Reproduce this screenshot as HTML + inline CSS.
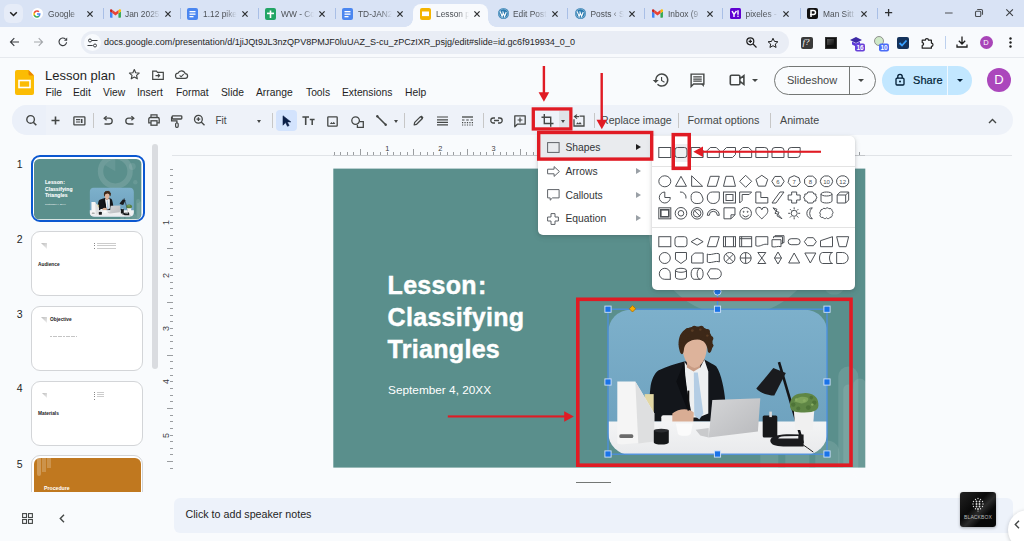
<!DOCTYPE html>
<html><head><meta charset="utf-8">
<style>
*{margin:0;padding:0;box-sizing:border-box}
html,body{width:1024px;height:541px;overflow:hidden;background:#f9fbfd;font-family:"Liberation Sans",sans-serif;position:relative}
.a{position:absolute}
svg{position:absolute;overflow:visible}
.tabt{position:absolute;top:9.4px;font-size:8.4px;line-height:10px;color:#4d5156;white-space:nowrap;overflow:hidden;-webkit-mask-image:linear-gradient(90deg,#000 65%,transparent 100%)}
.tsep{position:absolute;top:8px;width:1px;height:11px;background:#a9bfe6}
.menu{position:absolute;top:87px;font-size:10.3px;line-height:12px;color:#1f1f1f}
.tsp{position:absolute;top:113px;width:1px;height:15px;background:#c7c7c7}
</style></head>
<body>

<div class="a" style="left:0;top:0;width:1024px;height:27px;background:#d9e3f5"></div>
<div class="a" style="left:4px;top:4px;width:19px;height:19px;border-radius:6px;background:#e6ecf8"></div>
<svg style="left:9px;top:11px" width="9" height="6" viewBox="0 0 9 6"><path d="M1.2 1.2l3.3 3.3 3.3-3.3" stroke="#1f1f1f" stroke-width="1.5" fill="none"/></svg>
<div class="a" style="left:413px;top:4px;width:75px;height:23px;background:#f8fafd;border-radius:8px 8px 0 0"></div>
<div class="a" style="left:405px;top:19px;width:8px;height:8px;background:radial-gradient(circle at 0 0,transparent 7.5px,#f8fafd 8px)"></div>
<div class="a" style="left:488px;top:19px;width:8px;height:8px;background:radial-gradient(circle at 100% 0,transparent 7.5px,#f8fafd 8px)"></div>
<div class="a" style="left:31.5px;top:8.1px;width:11px;height:11px;border-radius:50%;background:#fff"></div><svg style="left:33px;top:9.6px" width="8" height="8" viewBox="0 0 24 24"><path fill="#4285F4" d="M22.56 12.25c0-.78-.07-1.53-.2-2.25H12v4.26h5.92c-.26 1.37-1.04 2.53-2.21 3.31v2.77h3.57c2.08-1.92 3.28-4.74 3.28-8.09z"/><path fill="#34A853" d="M12 23c2.97 0 5.46-.98 7.28-2.66l-3.57-2.77c-.98.66-2.23 1.06-3.71 1.06-2.86 0-5.29-1.93-6.16-4.53H2.18v2.84C3.99 20.53 7.7 23 12 23z"/><path fill="#FBBC05" d="M5.84 14.09c-.22-.66-.35-1.36-.35-2.09s.13-1.43.35-2.09V7.07H2.18C1.43 8.55 1 10.22 1 12s.43 3.45 1.18 4.93l2.85-2.22.81-.62z"/><path fill="#EA4335" d="M12 5.38c1.62 0 3.06.56 4.21 1.64l3.15-3.15C17.45 2.09 14.97 1 12 1 7.7 1 3.99 3.47 2.18 7.07l3.66 2.84c.87-2.6 3.3-4.53 6.16-4.53z"/></svg>
<div class="tabt" style="left:48px;width:34px">Google</div>
<svg style="left:87.1px;top:10.8px" width="6" height="6" viewBox="0 0 6 6"><path d="M.4.4l5.2 5.2M5.6.4L.4 5.6" stroke="#2d2f31" stroke-width="1.25"/></svg>
<div class="tsep" style="left:102.5px"></div>
<svg style="left:109.5px;top:9px" width="11" height="9" viewBox="0 0 24 18"><path fill="#4285f4" d="M1.6 18h3.8V8.7L0 4.6v11.8C0 17.3.7 18 1.6 18z"/><path fill="#34a853" d="M18.5 18h3.8c.9 0 1.6-.7 1.6-1.6V4.6l-5.5 4.1"/><path fill="#fbbc04" d="M18.5 1.5v7.2L24 4.6V2.4c0-2-2.3-3.2-3.9-2z"/><path fill="#ea4335" d="M5.5 8.7V1.5L12 6.4l6.5-4.9v7.2L12 13.6"/><path fill="#c5221f" d="M0 2.4v2.2l5.5 4.1V1.5L3.9.4C2.3-.8 0 .4 0 2.4z"/></svg>
<div class="tabt" style="left:125px;width:35px">Jan 2025</div>
<svg style="left:165.1px;top:10.8px" width="6" height="6" viewBox="0 0 6 6"><path d="M.4.4l5.2 5.2M5.6.4L.4 5.6" stroke="#2d2f31" stroke-width="1.25"/></svg>
<div class="tsep" style="left:180px"></div>
<svg style="left:186.5px;top:8px" width="11" height="12" viewBox="0 0 11 12"><rect x="0" y="0" width="11" height="12" rx="2" fill="#4a86f0"/><rect x="2.5" y="3" width="6" height="1.3" fill="#fff"/><rect x="2.5" y="5.5" width="6" height="1.3" fill="#fff"/><rect x="2.5" y="8" width="4" height="1.3" fill="#fff"/></svg>
<div class="tabt" style="left:203px;width:34px">1.12 pike</div>
<svg style="left:242.1px;top:10.8px" width="6" height="6" viewBox="0 0 6 6"><path d="M.4.4l5.2 5.2M5.6.4L.4 5.6" stroke="#2d2f31" stroke-width="1.25"/></svg>
<div class="tsep" style="left:257.5px"></div>
<svg style="left:264.5px;top:8px" width="11" height="12" viewBox="0 0 11 12"><rect x="0" y="0" width="11" height="12" rx="2" fill="#22a565"/><rect x="4.7" y="2.5" width="1.6" height="7.5" fill="#fff"/><rect x="2" y="4.6" width="7" height="1.6" fill="#fff"/></svg>
<div class="tabt" style="left:281px;width:33px">WW - Co</div>
<svg style="left:319.1px;top:10.8px" width="6" height="6" viewBox="0 0 6 6"><path d="M.4.4l5.2 5.2M5.6.4L.4 5.6" stroke="#2d2f31" stroke-width="1.25"/></svg>
<div class="tsep" style="left:334.5px"></div>
<svg style="left:341.5px;top:8px" width="11" height="12" viewBox="0 0 11 12"><rect x="0" y="0" width="11" height="12" rx="2" fill="#4a86f0"/><rect x="2.5" y="3" width="6" height="1.3" fill="#fff"/><rect x="2.5" y="5.5" width="6" height="1.3" fill="#fff"/><rect x="2.5" y="8" width="4" height="1.3" fill="#fff"/></svg>
<div class="tabt" style="left:358px;width:34px">TD-JAN2</div>
<svg style="left:397.1px;top:10.8px" width="6" height="6" viewBox="0 0 6 6"><path d="M.4.4l5.2 5.2M5.6.4L.4 5.6" stroke="#2d2f31" stroke-width="1.25"/></svg>
<svg style="left:419.5px;top:8px" width="11" height="12" viewBox="0 0 11 12"><rect x="0" y="0" width="11" height="12" rx="2" fill="#f4b400"/><rect x="2" y="3.5" width="7" height="4.6" fill="#fff"/></svg>
<div class="tabt" style="left:436px;width:33px">Lesson p</div>
<svg style="left:474.1px;top:10.8px" width="6" height="6" viewBox="0 0 6 6"><path d="M.4.4l5.2 5.2M5.6.4L.4 5.6" stroke="#2d2f31" stroke-width="1.25"/></svg>
<svg style="left:497.5px;top:8px" width="11" height="11" viewBox="0 0 11 11"><circle cx="5.5" cy="5.5" r="5.5" fill="#2a7ab0"/><circle cx="5.5" cy="5.5" r="4.6" fill="none" stroke="#d6e6f0" stroke-width=".5"/><path d="M2.2 3.4l1.9 5 1.3-3.6M4.7 3.4l1.9 5 1.6-4.4" stroke="#fff" stroke-width="1.1" fill="none"/></svg>
<div class="tabt" style="left:513px;width:33.5px">Edit Post</div>
<svg style="left:551.6px;top:10.8px" width="6" height="6" viewBox="0 0 6 6"><path d="M.4.4l5.2 5.2M5.6.4L.4 5.6" stroke="#2d2f31" stroke-width="1.25"/></svg>
<div class="tsep" style="left:567px"></div>
<svg style="left:574.5px;top:8px" width="11" height="11" viewBox="0 0 11 11"><circle cx="5.5" cy="5.5" r="5.5" fill="#2a7ab0"/><circle cx="5.5" cy="5.5" r="4.6" fill="none" stroke="#d6e6f0" stroke-width=".5"/><path d="M2.2 3.4l1.9 5 1.3-3.6M4.7 3.4l1.9 5 1.6-4.4" stroke="#fff" stroke-width="1.1" fill="none"/></svg>
<div class="tabt" style="left:590.5px;width:33.5px">Posts &lsaquo; S</div>
<svg style="left:629.1px;top:10.8px" width="6" height="6" viewBox="0 0 6 6"><path d="M.4.4l5.2 5.2M5.6.4L.4 5.6" stroke="#2d2f31" stroke-width="1.25"/></svg>
<div class="tsep" style="left:644px"></div>
<svg style="left:651.5px;top:9px" width="11" height="9" viewBox="0 0 24 18"><path fill="#4285f4" d="M1.6 18h3.8V8.7L0 4.6v11.8C0 17.3.7 18 1.6 18z"/><path fill="#34a853" d="M18.5 18h3.8c.9 0 1.6-.7 1.6-1.6V4.6l-5.5 4.1"/><path fill="#fbbc04" d="M18.5 1.5v7.2L24 4.6V2.4c0-2-2.3-3.2-3.9-2z"/><path fill="#ea4335" d="M5.5 8.7V1.5L12 6.4l6.5-4.9v7.2L12 13.6"/><path fill="#c5221f" d="M0 2.4v2.2l5.5 4.1V1.5L3.9.4C2.3-.8 0 .4 0 2.4z"/></svg>
<div class="tabt" style="left:668px;width:33.5px">Inbox (9</div>
<svg style="left:706.6px;top:10.8px" width="6" height="6" viewBox="0 0 6 6"><path d="M.4.4l5.2 5.2M5.6.4L.4 5.6" stroke="#2d2f31" stroke-width="1.25"/></svg>
<div class="tsep" style="left:721.5px"></div>
<svg style="left:729.5px;top:8px" width="11" height="11" viewBox="0 0 11 11"><rect width="11" height="11" rx="1.5" fill="#5f01d1"/><path d="M2 3l2 3.3V9M6.5 3L4 6.3" stroke="#fff" stroke-width="1.4" fill="none"/><path d="M8 2.3v4.5" stroke="#fff" stroke-width="1.4"/><circle cx="8" cy="8.3" r=".8" fill="#fff"/></svg>
<div class="tabt" style="left:745.5px;width:32.5px">pixeles -</div>
<svg style="left:783.1px;top:10.8px" width="6" height="6" viewBox="0 0 6 6"><path d="M.4.4l5.2 5.2M5.6.4L.4 5.6" stroke="#2d2f31" stroke-width="1.25"/></svg>
<div class="tsep" style="left:799.5px"></div>
<svg style="left:806.5px;top:8px" width="11" height="11" viewBox="0 0 11 11"><rect width="11" height="11" rx="2" fill="#111"/><path d="M4 9V2.5h2.5a2 2 0 0 1 0 4H3" stroke="#fff" stroke-width="1.5" fill="none"/></svg>
<div class="tabt" style="left:823px;width:33px">Man Sitt</div>
<svg style="left:861.1px;top:10.8px" width="6" height="6" viewBox="0 0 6 6"><path d="M.4.4l5.2 5.2M5.6.4L.4 5.6" stroke="#2d2f31" stroke-width="1.25"/></svg>
<div class="tsep" style="left:876.5px"></div>
<svg style="left:884.6px;top:9.3px" width="7.2" height="7.2" viewBox="0 0 7.2 7.2"><path d="M3.6 0v7.2M0 3.6h7.2" stroke="#2d2f31" stroke-width="1.3"/></svg>
<svg style="left:945px;top:12px" width="7.6" height="2" viewBox="0 0 7.6 2"><path d="M0 1h7.6" stroke="#5a5d61" stroke-width="1.1"/></svg>
<svg style="left:975px;top:9.1px" width="8" height="8" viewBox="0 0 8 8"><rect x=".5" y="2.2" width="5.3" height="5.3" rx="1" fill="none" stroke="#4a4d51" stroke-width="1.1"/><path d="M2.2.5h4a1.3 1.3 0 0 1 1.3 1.3v4" fill="none" stroke="#4a4d51" stroke-width="1.1"/></svg>
<svg style="left:1006px;top:9.3px" width="7.2" height="7.2" viewBox="0 0 7.2 7.2"><path d="M.3.3l6.6 6.6M6.9.3L.3 6.9" stroke="#3c3f43" stroke-width="1.1"/></svg>
<div class="a" style="left:0;top:27px;width:1024px;height:30px;background:#f8fafd"></div>
<div class="a" style="left:0;top:57px;width:1024px;height:1px;background:#e6e9ee"></div>
<div class="a" style="left:81px;top:31px;width:708px;height:23px;border-radius:12px;background:#e9edf5"></div>
<div class="a" style="left:84px;top:34px;width:17px;height:17px;border-radius:50%;background:#f8fafd"></div>
<div class="a" style="left:104px;top:37.2px;font-size:9.05px;color:#1f1f1f;white-space:nowrap">docs.google.com/presentation/d/1jiJQt9JL3nzQPV8PMJF0luUAZ_S-cu_zPCzIXR_psjg/edit#slide=id.gc6f919934_0_0</div>
<svg style="left:9px;top:37px" width="11" height="10" viewBox="0 0 11 10"><path d="M10 5H1.5M5.3 1.2L1.5 5l3.8 3.8" stroke="#3a3d41" stroke-width="1.15" fill="none"/></svg>
<svg style="left:33px;top:37px" width="11" height="10" viewBox="0 0 11 10"><path d="M1 5h8.5M5.7 1.2L9.5 5 5.7 8.8" stroke="#a4a7ab" stroke-width="1.15" fill="none"/></svg>
<svg style="left:58px;top:37px" width="10" height="10" viewBox="0 0 10 10"><path d="M8.6 5.2A3.8 3.8 0 1 1 7.4 2" stroke="#3a3d41" stroke-width="1.15" fill="none"/><path d="M9.2 .6v3.2H6z" fill="#3a3d41"/></svg>
<svg style="left:87px;top:37.5px" width="11" height="10" viewBox="0 0 11 10"><circle cx="3" cy="2.5" r="1.5" fill="none" stroke="#3a3d41" stroke-width="1"/><path d="M4.8 2.5h5.7M0.5 7.5h5.2" stroke="#3a3d41" stroke-width="1"/><circle cx="8" cy="7.5" r="1.5" fill="none" stroke="#3a3d41" stroke-width="1"/></svg>
<svg style="left:746px;top:37px" width="11" height="11" viewBox="0 0 11 11"><circle cx="4.3" cy="4.3" r="3.5" fill="none" stroke="#1f1f1f" stroke-width="1.2"/><path d="M7 7l3.5 3.5M4.3 2.6v3.4M2.6 4.3h3.4" stroke="#1f1f1f" stroke-width="1.2"/></svg>
<svg style="left:767px;top:36.5px" width="12" height="12" viewBox="0 0 24 24"><path d="M12 2.5l2.9 6.3 6.9.7-5.2 4.6 1.5 6.8L12 17.4l-6.1 3.5 1.5-6.8L2.2 9.5l6.9-.7z" fill="none" stroke="#1f1f1f" stroke-width="2"/></svg>
<div class="a" style="left:801px;top:36.5px;width:12px;height:12px;border-radius:2px;background:#3a3a3a"></div><div class="a" style="left:802.5px;top:36.5px;font-size:9px;font-style:italic;font-family:&quot;Liberation Serif&quot;;color:#fff">f?</div>
<div class="a" style="left:825px;top:36.5px;width:12px;height:12px;border-radius:1px;background:#111;box-shadow:inset 0 0 0 1px #333"></div><div class="a" style="left:827px;top:39px;width:7px;height:6px;background:linear-gradient(135deg,#555,#111)"></div>
<svg style="left:848px;top:35px" width="18" height="17" viewBox="0 0 18 17"><path d="M2 5l6-3 6 3-6 3z" fill="#3d2aa6"/><path d="M4 6.5v3l4 2 4-2v-3l-4 2z" fill="#5c3ad6"/><rect x="7" y="8.5" width="10" height="8" rx="2" fill="#6741d9"/><text x="12" y="15" font-size="6.5" fill="#fff" text-anchor="middle" font-family="Liberation Sans" font-weight="bold">16</text></svg>
<svg style="left:872px;top:35px" width="18" height="17" viewBox="0 0 18 17"><circle cx="7" cy="6" r="4.5" fill="#cfe8c8" stroke="#7a7a7a" stroke-width=".8"/><rect x="7" y="8.5" width="10" height="8" rx="2" fill="#4a6cf7"/><text x="12" y="15" font-size="6.5" fill="#fff" text-anchor="middle" font-family="Liberation Sans" font-weight="bold">10</text></svg>
<svg style="left:897px;top:36.5px" width="12" height="12" viewBox="0 0 12 12"><rect width="12" height="12" rx="2" fill="#14325c"/><path d="M2.5 6l2.5 2.5 4.5-5" stroke="#3aa0ff" stroke-width="1.8" fill="none"/></svg>
<svg style="left:921px;top:36.5px" width="12" height="12" viewBox="0 0 12 12"><path d="M1.2 3.2h3.1a1.6 1.6 0 0 1 3.2 0h2.9v2.9a1.6 1.6 0 0 1 0 3.2v1.9H1.2V8.4a1.4 1.4 0 0 0 0-2.8z" fill="none" stroke="#1f1f1f" stroke-width="1.2" stroke-linejoin="round"/></svg>
<div class="a" style="left:944.5px;top:36px;width:1px;height:13px;background:#bcd0ee"></div>
<svg style="left:956px;top:36px" width="12" height="12" viewBox="0 0 12 12"><path d="M6 .5v7.5M2.8 4.8L6 8l3.2-3.2M1 8.5v2.5h10V8.5" stroke="#1f1f1f" stroke-width="1.3" fill="none"/></svg>
<div class="a" style="left:979.5px;top:35.5px;width:13px;height:13px;border-radius:50%;background:#a845b8;color:#fff;font-size:7.5px;text-align:center;line-height:13px">D</div>
<svg style="left:1008.5px;top:37px" width="3" height="11" viewBox="0 0 3 11"><circle cx="1.5" cy="1.5" r="1.2" fill="#1f1f1f"/><circle cx="1.5" cy="5.5" r="1.2" fill="#1f1f1f"/><circle cx="1.5" cy="9.5" r="1.2" fill="#1f1f1f"/></svg>
<!-- Slides logo -->
<svg style="left:15px;top:70px" width="19" height="25" viewBox="0 0 19 25"><path d="M2 0h11.5L19 5.5V23a2 2 0 0 1-2 2H2a2 2 0 0 1-2-2V2a2 2 0 0 1 2-2z" fill="#fbbc04"/><path d="M13.5 0L19 5.5h-4a1.5 1.5 0 0 1-1.5-1.5z" fill="#ea8600"/><rect x="4" y="10.5" width="11" height="7" fill="none" stroke="#fff" stroke-width="1.6"/></svg>
<div class="a" style="left:45px;top:68.8px;font-size:13px;line-height:13px;color:#1f1f1f;white-space:nowrap">Lesson plan</div>
<!-- star -->
<svg style="left:128.3px;top:67.8px" width="12.6" height="12.6" viewBox="0 0 24 24"><path d="M12 3l2.7 6.1 6.6.6-5 4.4 1.5 6.5L12 17.2l-5.8 3.4 1.5-6.5-5-4.4 6.6-.6z" fill="none" stroke="#444746" stroke-width="2.2" stroke-linejoin="round"/></svg>
<!-- folder move -->
<svg style="left:152px;top:69.5px" width="12" height="10" viewBox="0 0 12 10"><path d="M.7 1.2h3.8l1 1.2h5.8v6.9H.7z" fill="none" stroke="#444746" stroke-width="1.2"/><path d="M3.5 5.6h4.2M6 3.9l1.7 1.7L6 7.3" stroke="#444746" stroke-width="1.1" fill="none"/></svg>
<!-- cloud done -->
<svg style="left:174.5px;top:70px" width="13" height="9" viewBox="0 0 13 9"><path d="M3.2 8.4A2.6 2.6 0 0 1 3 3.2 3.8 3.8 0 0 1 10.2 3.6 2.4 2.4 0 0 1 10.2 8.4z" fill="none" stroke="#444746" stroke-width="1.2"/><path d="M4.6 5.4l1.5 1.4 2.6-2.6" stroke="#444746" stroke-width="1.1" fill="none"/></svg>
<!-- menus -->
<div class="menu" style="left:45.5px">File</div>
<div class="menu" style="left:73px">Edit</div>
<div class="menu" style="left:103px">View</div>
<div class="menu" style="left:137px">Insert</div>
<div class="menu" style="left:176px">Format</div>
<div class="menu" style="left:221px">Slide</div>
<div class="menu" style="left:256px">Arrange</div>
<div class="menu" style="left:306px">Tools</div>
<div class="menu" style="left:342px">Extensions</div>
<div class="menu" style="left:405px">Help</div>
<!-- history -->
<svg style="left:652px;top:71px" width="18" height="18" viewBox="0 0 24 24"><path d="M13 3a9 9 0 0 0-9 9H1l3.9 3.9.1.1L9 12H6a7 7 0 1 1 2.05 4.95l-1.42 1.42A9 9 0 1 0 13 3zm-1 5v5l4.28 2.54.72-1.21-3.5-2.08V8z" fill="#444746"/></svg>
<!-- comments -->
<svg style="left:688.5px;top:72px" width="17" height="17" viewBox="0 0 24 24"><path d="M3 3h18v14H6.5L3 20.5z" fill="none" stroke="#444746" stroke-width="2"/><path d="M6 7h12M6 10h12M6 13h12" stroke="#444746" stroke-width="1.8"/><path d="M21 17v4l-4-4" fill="#444746"/></svg>
<!-- meet -->
<svg style="left:729px;top:74px" width="16" height="12" viewBox="0 0 16 12"><path d="M1.3 2.6a1.3 1.3 0 0 1 1.3-1.3h7a1.3 1.3 0 0 1 1.3 1.3v6.8a1.3 1.3 0 0 1-1.3 1.3h-7a1.3 1.3 0 0 1-1.3-1.3zM10.9 4.6l4-3v8.8l-4-3" fill="none" stroke="#444746" stroke-width="1.6"/></svg>
<div class="a" style="left:752px;top:78.5px;border-left:3px solid transparent;border-right:3px solid transparent;border-top:3px solid #444746"></div>
<!-- Slideshow button -->
<div class="a" style="left:774px;top:66px;width:102px;height:29px;border:1px solid #747775;border-radius:15px"></div>
<div class="a" style="left:848.5px;top:66px;width:1px;height:29px;background:#747775"></div>
<div class="a" style="left:787px;top:75.2px;font-size:11px;line-height:11px;color:#444746;white-space:nowrap">Slideshow</div>
<div class="a" style="left:858px;top:79px;border-left:3px solid transparent;border-right:3px solid transparent;border-top:3px solid #444746"></div>
<!-- Share -->
<div class="a" style="left:882px;top:66px;width:90px;height:29px;background:#c2e7ff;border-radius:15px"></div>
<div class="a" style="left:947px;top:66px;width:1px;height:29px;background:#f0f8ff"></div>
<svg style="left:895px;top:73px" width="10" height="13" viewBox="0 0 10 13"><rect x="1" y="5.2" width="8" height="6.8" rx="1" fill="none" stroke="#001d35" stroke-width="1.3"/><path d="M2.8 5.2V3.5a2.2 2.2 0 0 1 4.4 0v1.7" fill="none" stroke="#001d35" stroke-width="1.3"/><circle cx="5" cy="8.6" r="1" fill="#001d35"/></svg>
<div class="a" style="left:913px;top:75.2px;font-size:11px;line-height:11px;color:#001d35;-webkit-text-stroke:.2px #001d35;white-space:nowrap;letter-spacing:.05px">Share</div>
<div class="a" style="left:957px;top:79px;border-left:3px solid transparent;border-right:3px solid transparent;border-top:3px solid #001d35"></div>
<!-- avatar -->
<div class="a" style="left:987px;top:68px;width:24px;height:24px;border-radius:50%;background:#ab47bc;color:#fff;font-size:13px;line-height:24px;text-align:center">D</div>

<div class="a" style="left:12px;top:105.2px;width:1001px;height:30px;border-radius:15px;background:#eef2f9"></div>
<div class="a" style="left:12px;top:105.2px;width:34px;height:30px;border-radius:15px 0 0 15px;background:#ebf0f9"></div>
<!-- search -->
<svg style="left:25px;top:114px" width="13" height="13" viewBox="0 0 13 13"><circle cx="5.6" cy="5.4" r="3.8" fill="none" stroke="#444746" stroke-width="1.4"/><path d="M8.3 8.2l3 3" stroke="#444746" stroke-width="1.6"/></svg>
<!-- + -->
<svg style="left:51px;top:116px" width="9" height="9" viewBox="0 0 9 9"><path d="M4.5 .5v8M.5 4.5h8" stroke="#444746" stroke-width="1.6"/></svg>
<!-- layout -->
<svg style="left:73px;top:115.5px" width="13" height="10" viewBox="0 0 13 10"><rect x=".9" y=".9" width="11" height="8" rx=".6" fill="none" stroke="#444746" stroke-width="1.3"/><path d="M3 3.7h4.2M3 6h4.2" stroke="#444746" stroke-width="1.2"/><path d="M8.7 3v4" stroke="#444746" stroke-width="1.6"/></svg>
<div class="tsp" style="left:93px"></div>
<!-- undo -->
<svg style="left:102px;top:115px" width="11" height="11" viewBox="0 0 11 11"><path d="M3 3.2h4.3a2.9 2.9 0 0 1 0 5.8H2.5" fill="none" stroke="#444746" stroke-width="1.3"/><path d="M4.6 1.2L2.2 3.2l2.4 2.1" fill="none" stroke="#444746" stroke-width="1.3"/></svg>
<!-- redo -->
<svg style="left:125px;top:115px" width="11" height="11" viewBox="0 0 11 11"><path d="M8 3.2H3.7a2.9 2.9 0 0 0 0 5.8h4.8" fill="none" stroke="#444746" stroke-width="1.3"/><path d="M6.4 1.2l2.4 2 -2.4 2.1" fill="none" stroke="#444746" stroke-width="1.3"/></svg>
<!-- print -->
<svg style="left:147.5px;top:114px" width="12" height="12" viewBox="0 0 12 12"><path d="M3 3.3V.8h6v2.5" fill="none" stroke="#444746" stroke-width="1.2"/><path d="M2.8 8.8H.8V4.9a1.4 1.4 0 0 1 1.4-1.4h7.6a1.4 1.4 0 0 1 1.4 1.4v3.9H9.2" fill="none" stroke="#444746" stroke-width="1.3"/><rect x="3" y="6.8" width="6" height="4.4" fill="none" stroke="#444746" stroke-width="1.3"/></svg>
<!-- paint format -->
<svg style="left:170.5px;top:114.5px" width="12" height="13" viewBox="0 0 12 13"><rect x="1.2" y=".8" width="9.6" height="3.2" rx=".8" fill="none" stroke="#444746" stroke-width="1.3"/><path d="M1.2 2.4H.6v3.5h5.3v2.2" fill="none" stroke="#444746" stroke-width="1.3"/><rect x="4.6" y="8" width="2.6" height="4.3" rx="1" fill="none" stroke="#444746" stroke-width="1.2"/></svg>
<!-- zoom -->
<svg style="left:193px;top:113.5px" width="13" height="13" viewBox="0 0 13 13"><circle cx="5.4" cy="5.2" r="3.9" fill="none" stroke="#444746" stroke-width="1.3"/><path d="M8.2 8l3.3 3.3M5.4 3.3v3.8M3.5 5.2h3.8" stroke="#444746" stroke-width="1.3"/></svg>
<div class="a" style="left:215.5px;top:115.5px;font-size:10px;line-height:10px;color:#444746">Fit</div>
<div class="a" style="left:256.5px;top:119.5px;border-left:2.8px solid transparent;border-right:2.8px solid transparent;border-top:3.2px solid #444746"></div>
<div class="tsp" style="left:271.5px"></div>
<!-- select -->
<div class="a" style="left:276px;top:110px;width:21px;height:21px;border-radius:4px;background:#d3e3fd"></div>
<svg style="left:281.5px;top:115px" width="10" height="12" viewBox="0 0 10 12"><path d="M1 .8v9.4l2.6-2.6 1.9 3.7 1.6-.8-1.9-3.6h3.6z" fill="#0b1f47" stroke="#0b1f47" stroke-width=".6" stroke-linejoin="round"/></svg>
<!-- Tt -->
<svg style="left:302px;top:116px" width="13" height="9" viewBox="0 0 13 9"><path d="M.4 1h6.6M3.7 1v8" stroke="#444746" stroke-width="1.6"/><path d="M7.8 3.6h4.8M10.2 3.6V9" stroke="#444746" stroke-width="1.5"/></svg>
<!-- image -->
<svg style="left:327px;top:115.5px" width="11" height="11" viewBox="0 0 11 11"><rect x=".8" y=".8" width="9.4" height="9.4" rx=".6" fill="none" stroke="#444746" stroke-width="1.3"/><path d="M2.8 8l1.7-2 1.1 1.2 1.2-1.5L8.3 8z" fill="#444746"/></svg>
<!-- shape -->
<svg style="left:350.5px;top:115.5px" width="13" height="12" viewBox="0 0 13 12"><circle cx="4.6" cy="4.6" r="3.8" fill="none" stroke="#444746" stroke-width="1.3"/><path d="M8.6 5.6h3.7v5.8H6.4V9" fill="none" stroke="#444746" stroke-width="1.3"/></svg>
<!-- line -->
<svg style="left:375.5px;top:114.5px" width="11" height="11" viewBox="0 0 11 11"><path d="M1.2 1.2l8.6 8.6" stroke="#444746" stroke-width="1.6"/><circle cx="1.3" cy="1.3" r="1.2" fill="#444746"/><circle cx="9.7" cy="9.7" r="1.2" fill="#444746"/></svg>
<div class="a" style="left:394px;top:119.5px;border-left:2.8px solid transparent;border-right:2.8px solid transparent;border-top:3.2px solid #444746"></div>
<div class="tsp" style="left:403.5px"></div>
<!-- pencil -->
<svg style="left:413px;top:115px" width="11" height="11" viewBox="0 0 11 11"><path d="M1.2 9.8l.5-2.4 5.8-5.8 1.9 1.9-5.8 5.8z" fill="none" stroke="#444746" stroke-width="1.3" stroke-linejoin="round"/><path d="M7.6 1.5l1-1 1.9 1.9-1 1" fill="#444746"/></svg>
<!-- border weight -->
<svg style="left:437px;top:115.5px" width="11" height="10" viewBox="0 0 11 10"><path d="M0 1h11M0 3.8h11M0 6.4h11M0 8.9h11" stroke="#444746" stroke-width="1.2"/></svg>
<!-- border dash -->
<svg style="left:461.5px;top:115.5px" width="11" height="10" viewBox="0 0 11 10"><path d="M0 1h11" stroke="#444746" stroke-width="1.3"/><path d="M0 4h2.5M4.25 4h2.5M8.5 4H11" stroke="#444746" stroke-width="1.2"/><path d="M0 6.6h1.2M2.45 6.6h1.2M4.9 6.6h1.2M7.35 6.6h1.2M9.8 6.6H11" stroke="#444746" stroke-width="1.1"/><path d="M0 9h1.2M2.45 9h1.2M4.9 9h1.2M7.35 9h1.2M9.8 9H11" stroke="#444746" stroke-width="1"/></svg>
<div class="tsp" style="left:482.5px"></div>
<!-- link -->
<svg style="left:490px;top:116.5px" width="13" height="7" viewBox="0 0 13 7"><path d="M5 1H3.3a2.5 2.5 0 0 0 0 5H5M8 1h1.7a2.5 2.5 0 0 1 0 5H8M4 3.5h5" fill="none" stroke="#444746" stroke-width="1.3"/></svg>
<!-- add comment -->
<svg style="left:513.5px;top:114.5px" width="12" height="13" viewBox="0 0 12 13"><path d="M.8 .8h10.4v8.4H3.3L.8 11.7z" fill="none" stroke="#444746" stroke-width="1.3" stroke-linejoin="round"/><path d="M6 2.6v4.8M3.6 5h4.8" stroke="#444746" stroke-width="1.2"/></svg>
<!-- crop -->
<div class="a" style="left:558.5px;top:111px;width:10px;height:17px;background:#dfe3e8"></div>
<svg style="left:541px;top:114px" width="14" height="13" viewBox="0 0 14 13"><path d="M3.3 0v9.5h9.2M.5 3.2h9.2v9.5" fill="none" stroke="#444746" stroke-width="1.4"/></svg>
<div class="a" style="left:560.8px;top:119.5px;border-left:2.8px solid transparent;border-right:2.8px solid transparent;border-top:3.2px solid #444746"></div>
<!-- reset image -->
<svg style="left:573px;top:114px" width="12" height="13" viewBox="0 0 12 13"><path d="M1 5.2v6.8h10V2.2H6.5" fill="none" stroke="#444746" stroke-width="1.3"/><path d="M4 .6L1.5 2.6 4 4.6" fill="none" stroke="#444746" stroke-width="1.2"/><path d="M2 2.6h4" stroke="#444746" stroke-width="1.2"/><path d="M3 10.2l1.6-2 1.2 1.3 1.2-1.6 1.8 2.3z" fill="#444746"/></svg>
<div class="tsp" style="left:593.5px"></div>
<div class="a" style="left:601px;top:114.5px;font-size:10.6px;line-height:10.6px;color:#444746;white-space:nowrap">Replace image</div>
<div class="tsp" style="left:677.5px"></div>
<div class="a" style="left:687.5px;top:114.5px;font-size:10.8px;line-height:10.8px;color:#444746;white-space:nowrap">Format options</div>
<div class="tsp" style="left:769.5px"></div>
<div class="a" style="left:780px;top:114.5px;font-size:10.7px;line-height:10.7px;color:#444746;white-space:nowrap">Animate</div>
<svg style="left:987.5px;top:117.5px" width="9" height="6" viewBox="0 0 9 6"><path d="M1 5l3.5-3.5L8 5" fill="none" stroke="#444746" stroke-width="1.4"/></svg>

<!-- filmstrip -->
<div class="a" style="left:0;top:140px;width:160px;height:352px;overflow:hidden">
  <div class="a" style="left:0;top:19.3px;width:22.5px;text-align:right;font-size:10.5px;line-height:10.5px;color:#1f1f1f">1</div>
  <div class="a" style="left:30.5px;top:15.3px;width:114px;height:67px;border:2.6px solid #0b57d0;border-radius:9px;background:#fff"></div>
  <svg style="left:33.8px;top:18.6px" width="107.6" height="60.5" viewBox="0 0 532 299"><defs><clipPath id="thc"><rect width="532" height="299" rx="26"/></clipPath></defs><g clip-path="url(#thc)"><use href="#slideart"/></g></svg>

  <div class="a" style="left:0;top:93.6px;width:22.5px;text-align:right;font-size:10.5px;line-height:10.5px;color:#1f1f1f">2</div>
  <div class="a" style="left:31.3px;top:91.2px;width:112px;height:65px;border:1px solid #d3d5d8;border-radius:9px;background:#fff"></div>
  <div class="a" style="left:41px;top:103px;width:6px;height:6px;background:linear-gradient(135deg,#bbb,#eee);clip-path:polygon(0 0,100% 0,100% 100%)"></div>
  <div class="a" style="left:38px;top:121.5px;font-size:4.8px;font-weight:bold;color:#222">Audience</div>
  <div class="a" style="left:94px;top:102.5px;width:1px;height:7px;background:repeating-linear-gradient(180deg,#888 0 .9px,transparent .9px 2.4px)"></div><div class="a" style="left:97px;top:102.5px;width:19px;height:7px;background:repeating-linear-gradient(180deg,#ccc 0 .7px,transparent .7px 2.4px)"></div>

  <div class="a" style="left:0;top:168.6px;width:22.5px;text-align:right;font-size:10.5px;line-height:10.5px;color:#1f1f1f">3</div>
  <div class="a" style="left:31.3px;top:166px;width:112px;height:65px;border:1px solid #d3d5d8;border-radius:9px;background:#fff"></div>
  <div class="a" style="left:41px;top:177px;width:6px;height:6px;background:linear-gradient(135deg,#bbb,#eee);clip-path:polygon(0 0,100% 0,100% 100%)"></div>
  <div class="a" style="left:50px;top:176.5px;font-size:4.8px;font-weight:bold;color:#222">Objective</div>
  <div class="a" style="left:50px;top:193.5px;width:80px;height:.8px;background:repeating-linear-gradient(90deg,#c4c4c4 0 2px,transparent 2px 2.6px)"></div>
  <div class="a" style="left:50px;top:195.8px;width:27px;height:.8px;background:repeating-linear-gradient(90deg,#c4c4c4 0 2px,transparent 2px 2.6px)"></div>

  <div class="a" style="left:0;top:243.2px;width:22.5px;text-align:right;font-size:10.5px;line-height:10.5px;color:#1f1f1f">4</div>
  <div class="a" style="left:31.3px;top:241px;width:112px;height:65px;border:1px solid #d3d5d8;border-radius:9px;background:#fff"></div>
  <div class="a" style="left:42px;top:253px;width:5px;height:5px;background:linear-gradient(135deg,#bbb,#eee);clip-path:polygon(0 0,100% 0,100% 100%)"></div>
  <div class="a" style="left:94px;top:251.5px;width:1px;height:9px;background:repeating-linear-gradient(180deg,#888 0 .9px,transparent .9px 2.2px)"></div><div class="a" style="left:97px;top:251.5px;width:7px;height:9px;background:repeating-linear-gradient(180deg,#ccc 0 .7px,transparent .7px 2.2px)"></div>
  <div class="a" style="left:38px;top:270.5px;font-size:4.8px;font-weight:bold;color:#222">Materials</div>

  <div class="a" style="left:0;top:318.8px;width:22.5px;text-align:right;font-size:10.5px;line-height:10.5px;color:#1f1f1f">5</div>
  <div class="a" style="left:31.3px;top:315.4px;width:112px;height:65px;border:1px solid #d3d5d8;border-radius:9px;background:#fff"></div>
  <div class="a" style="left:33.5px;top:318px;width:107.5px;height:60px;border-radius:6px;background:#c0781f;overflow:hidden">
     <div class="a" style="left:3px;top:0;width:4px;height:18px;background:rgba(255,255,255,.25);border-radius:0 0 2px 2px"></div>
     <div class="a" style="left:8px;top:0;width:4px;height:14px;background:rgba(255,255,255,.2)"></div>
     <div class="a" style="left:13px;top:0;width:4px;height:10px;background:rgba(255,255,255,.2)"></div>
     <div class="a" style="left:10.5px;top:27px;font-size:5.2px;font-weight:bold;color:#fff">Procedure</div>
  </div>
</div>
<!-- scrollbar -->
<div class="a" style="left:152px;top:143.5px;width:6px;height:225px;border-radius:3px;background:#dadce0"></div>
<!-- bottom grid / chevron -->
<svg style="left:21.5px;top:512.5px" width="11" height="11" viewBox="0 0 11 11"><rect x=".6" y=".6" width="3.9" height="3.9" fill="none" stroke="#444746" stroke-width="1.1"/><rect x="6.5" y=".6" width="3.9" height="3.9" fill="none" stroke="#444746" stroke-width="1.1"/><rect x=".6" y="6.5" width="3.9" height="3.9" fill="none" stroke="#444746" stroke-width="1.1"/><rect x="6.5" y="6.5" width="3.9" height="3.9" fill="none" stroke="#444746" stroke-width="1.1"/></svg>
<svg style="left:59px;top:513.5px" width="6" height="9" viewBox="0 0 6 9"><path d="M5 .8L1.3 4.5 5 8.2" fill="none" stroke="#444746" stroke-width="1.4"/></svg>

<div class="a" style="left:172px;top:155px;width:840px;height:1px;background:#e1e4e8"></div>
<div class="a" style="left:333px;top:155px;width:532px;height:1px;background:#c4c7cb"></div>
<div class="a" style="left:333.50px;top:151.80px;width:1px;height:3.20px;background:#9a9da0"></div>
<div class="a" style="left:340.15px;top:151.80px;width:1px;height:3.20px;background:#9a9da0"></div>
<div class="a" style="left:346.80px;top:151.80px;width:1px;height:3.20px;background:#9a9da0"></div>
<div class="a" style="left:353.45px;top:151.80px;width:1px;height:3.20px;background:#9a9da0"></div>
<div class="a" style="left:360.10px;top:149.20px;width:1px;height:5.80px;background:#9a9da0"></div>
<div class="a" style="left:366.75px;top:151.80px;width:1px;height:3.20px;background:#9a9da0"></div>
<div class="a" style="left:373.40px;top:151.80px;width:1px;height:3.20px;background:#9a9da0"></div>
<div class="a" style="left:380.05px;top:151.80px;width:1px;height:3.20px;background:#9a9da0"></div>
<div class="a" style="left:386.70px;top:151.80px;width:1px;height:3.20px;background:#9a9da0"></div>
<div class="a" style="left:377.20px;top:144.6px;width:20px;text-align:center;font-size:7.4px;line-height:7.4px;color:#3c4043">1</div>
<div class="a" style="left:393.35px;top:151.80px;width:1px;height:3.20px;background:#9a9da0"></div>
<div class="a" style="left:400.00px;top:151.80px;width:1px;height:3.20px;background:#9a9da0"></div>
<div class="a" style="left:406.65px;top:151.80px;width:1px;height:3.20px;background:#9a9da0"></div>
<div class="a" style="left:413.30px;top:149.20px;width:1px;height:5.80px;background:#9a9da0"></div>
<div class="a" style="left:419.95px;top:151.80px;width:1px;height:3.20px;background:#9a9da0"></div>
<div class="a" style="left:426.60px;top:151.80px;width:1px;height:3.20px;background:#9a9da0"></div>
<div class="a" style="left:433.25px;top:151.80px;width:1px;height:3.20px;background:#9a9da0"></div>
<div class="a" style="left:439.90px;top:151.80px;width:1px;height:3.20px;background:#9a9da0"></div>
<div class="a" style="left:430.40px;top:144.6px;width:20px;text-align:center;font-size:7.4px;line-height:7.4px;color:#3c4043">2</div>
<div class="a" style="left:446.55px;top:151.80px;width:1px;height:3.20px;background:#9a9da0"></div>
<div class="a" style="left:453.20px;top:151.80px;width:1px;height:3.20px;background:#9a9da0"></div>
<div class="a" style="left:459.85px;top:151.80px;width:1px;height:3.20px;background:#9a9da0"></div>
<div class="a" style="left:466.50px;top:149.20px;width:1px;height:5.80px;background:#9a9da0"></div>
<div class="a" style="left:473.15px;top:151.80px;width:1px;height:3.20px;background:#9a9da0"></div>
<div class="a" style="left:479.80px;top:151.80px;width:1px;height:3.20px;background:#9a9da0"></div>
<div class="a" style="left:486.45px;top:151.80px;width:1px;height:3.20px;background:#9a9da0"></div>
<div class="a" style="left:493.10px;top:151.80px;width:1px;height:3.20px;background:#9a9da0"></div>
<div class="a" style="left:483.60px;top:144.6px;width:20px;text-align:center;font-size:7.4px;line-height:7.4px;color:#3c4043">3</div>
<div class="a" style="left:499.75px;top:151.80px;width:1px;height:3.20px;background:#9a9da0"></div>
<div class="a" style="left:506.40px;top:151.80px;width:1px;height:3.20px;background:#9a9da0"></div>
<div class="a" style="left:513.05px;top:151.80px;width:1px;height:3.20px;background:#9a9da0"></div>
<div class="a" style="left:519.70px;top:149.20px;width:1px;height:5.80px;background:#9a9da0"></div>
<div class="a" style="left:526.35px;top:151.80px;width:1px;height:3.20px;background:#9a9da0"></div>
<div class="a" style="left:533.00px;top:151.80px;width:1px;height:3.20px;background:#9a9da0"></div>
<div class="a" style="left:539.65px;top:151.80px;width:1px;height:3.20px;background:#9a9da0"></div>
<div class="a" style="left:546.30px;top:151.80px;width:1px;height:3.20px;background:#9a9da0"></div>
<div class="a" style="left:536.80px;top:144.6px;width:20px;text-align:center;font-size:7.4px;line-height:7.4px;color:#3c4043">4</div>
<div class="a" style="left:552.95px;top:151.80px;width:1px;height:3.20px;background:#9a9da0"></div>
<div class="a" style="left:559.60px;top:151.80px;width:1px;height:3.20px;background:#9a9da0"></div>
<div class="a" style="left:566.25px;top:151.80px;width:1px;height:3.20px;background:#9a9da0"></div>
<div class="a" style="left:572.90px;top:149.20px;width:1px;height:5.80px;background:#9a9da0"></div>
<div class="a" style="left:579.55px;top:151.80px;width:1px;height:3.20px;background:#9a9da0"></div>
<div class="a" style="left:586.20px;top:151.80px;width:1px;height:3.20px;background:#9a9da0"></div>
<div class="a" style="left:592.85px;top:151.80px;width:1px;height:3.20px;background:#9a9da0"></div>
<div class="a" style="left:599.50px;top:151.80px;width:1px;height:3.20px;background:#9a9da0"></div>
<div class="a" style="left:590.00px;top:144.6px;width:20px;text-align:center;font-size:7.4px;line-height:7.4px;color:#3c4043">5</div>
<div class="a" style="left:606.15px;top:151.80px;width:1px;height:3.20px;background:#9a9da0"></div>
<div class="a" style="left:612.80px;top:151.80px;width:1px;height:3.20px;background:#9a9da0"></div>
<div class="a" style="left:619.45px;top:151.80px;width:1px;height:3.20px;background:#9a9da0"></div>
<div class="a" style="left:626.10px;top:149.20px;width:1px;height:5.80px;background:#9a9da0"></div>
<div class="a" style="left:632.75px;top:151.80px;width:1px;height:3.20px;background:#9a9da0"></div>
<div class="a" style="left:639.40px;top:151.80px;width:1px;height:3.20px;background:#9a9da0"></div>
<div class="a" style="left:646.05px;top:151.80px;width:1px;height:3.20px;background:#9a9da0"></div>
<div class="a" style="left:652.70px;top:151.80px;width:1px;height:3.20px;background:#9a9da0"></div>
<div class="a" style="left:643.20px;top:144.6px;width:20px;text-align:center;font-size:7.4px;line-height:7.4px;color:#3c4043">6</div>
<div class="a" style="left:659.35px;top:151.80px;width:1px;height:3.20px;background:#9a9da0"></div>
<div class="a" style="left:666.00px;top:151.80px;width:1px;height:3.20px;background:#9a9da0"></div>
<div class="a" style="left:672.65px;top:151.80px;width:1px;height:3.20px;background:#9a9da0"></div>
<div class="a" style="left:679.30px;top:149.20px;width:1px;height:5.80px;background:#9a9da0"></div>
<div class="a" style="left:685.95px;top:151.80px;width:1px;height:3.20px;background:#9a9da0"></div>
<div class="a" style="left:692.60px;top:151.80px;width:1px;height:3.20px;background:#9a9da0"></div>
<div class="a" style="left:699.25px;top:151.80px;width:1px;height:3.20px;background:#9a9da0"></div>
<div class="a" style="left:705.90px;top:151.80px;width:1px;height:3.20px;background:#9a9da0"></div>
<div class="a" style="left:696.40px;top:144.6px;width:20px;text-align:center;font-size:7.4px;line-height:7.4px;color:#3c4043">7</div>
<div class="a" style="left:712.55px;top:151.80px;width:1px;height:3.20px;background:#9a9da0"></div>
<div class="a" style="left:719.20px;top:151.80px;width:1px;height:3.20px;background:#9a9da0"></div>
<div class="a" style="left:725.85px;top:151.80px;width:1px;height:3.20px;background:#9a9da0"></div>
<div class="a" style="left:732.50px;top:149.20px;width:1px;height:5.80px;background:#9a9da0"></div>
<div class="a" style="left:739.15px;top:151.80px;width:1px;height:3.20px;background:#9a9da0"></div>
<div class="a" style="left:745.80px;top:151.80px;width:1px;height:3.20px;background:#9a9da0"></div>
<div class="a" style="left:752.45px;top:151.80px;width:1px;height:3.20px;background:#9a9da0"></div>
<div class="a" style="left:759.10px;top:151.80px;width:1px;height:3.20px;background:#9a9da0"></div>
<div class="a" style="left:749.60px;top:144.6px;width:20px;text-align:center;font-size:7.4px;line-height:7.4px;color:#3c4043">8</div>
<div class="a" style="left:765.75px;top:151.80px;width:1px;height:3.20px;background:#9a9da0"></div>
<div class="a" style="left:772.40px;top:151.80px;width:1px;height:3.20px;background:#9a9da0"></div>
<div class="a" style="left:779.05px;top:151.80px;width:1px;height:3.20px;background:#9a9da0"></div>
<div class="a" style="left:785.70px;top:149.20px;width:1px;height:5.80px;background:#9a9da0"></div>
<div class="a" style="left:792.35px;top:151.80px;width:1px;height:3.20px;background:#9a9da0"></div>
<div class="a" style="left:799.00px;top:151.80px;width:1px;height:3.20px;background:#9a9da0"></div>
<div class="a" style="left:805.65px;top:151.80px;width:1px;height:3.20px;background:#9a9da0"></div>
<div class="a" style="left:812.30px;top:151.80px;width:1px;height:3.20px;background:#9a9da0"></div>
<div class="a" style="left:802.80px;top:144.6px;width:20px;text-align:center;font-size:7.4px;line-height:7.4px;color:#3c4043">9</div>
<div class="a" style="left:818.95px;top:151.80px;width:1px;height:3.20px;background:#9a9da0"></div>
<div class="a" style="left:825.60px;top:151.80px;width:1px;height:3.20px;background:#9a9da0"></div>
<div class="a" style="left:832.25px;top:151.80px;width:1px;height:3.20px;background:#9a9da0"></div>
<div class="a" style="left:838.90px;top:149.20px;width:1px;height:5.80px;background:#9a9da0"></div>
<div class="a" style="left:845.55px;top:151.80px;width:1px;height:3.20px;background:#9a9da0"></div>
<div class="a" style="left:852.20px;top:151.80px;width:1px;height:3.20px;background:#9a9da0"></div>
<div class="a" style="left:858.85px;top:151.80px;width:1px;height:3.20px;background:#9a9da0"></div>
<div class="a" style="left:169.80px;top:168.50px;width:3.20px;height:1px;background:#9a9da0"></div>
<div class="a" style="left:169.80px;top:175.15px;width:3.20px;height:1px;background:#9a9da0"></div>
<div class="a" style="left:169.80px;top:181.80px;width:3.20px;height:1px;background:#9a9da0"></div>
<div class="a" style="left:169.80px;top:188.45px;width:3.20px;height:1px;background:#9a9da0"></div>
<div class="a" style="left:167.20px;top:195.10px;width:5.80px;height:1px;background:#9a9da0"></div>
<div class="a" style="left:169.80px;top:201.75px;width:3.20px;height:1px;background:#9a9da0"></div>
<div class="a" style="left:169.80px;top:208.40px;width:3.20px;height:1px;background:#9a9da0"></div>
<div class="a" style="left:169.80px;top:215.05px;width:3.20px;height:1px;background:#9a9da0"></div>
<div class="a" style="left:169.80px;top:221.70px;width:3.20px;height:1px;background:#9a9da0"></div>
<div class="a" style="left:155.8px;top:217.70px;width:20px;text-align:center;font-size:9px;line-height:9px;color:#3c4043;transform:rotate(-90deg)">1</div>
<div class="a" style="left:169.80px;top:228.35px;width:3.20px;height:1px;background:#9a9da0"></div>
<div class="a" style="left:169.80px;top:235.00px;width:3.20px;height:1px;background:#9a9da0"></div>
<div class="a" style="left:169.80px;top:241.65px;width:3.20px;height:1px;background:#9a9da0"></div>
<div class="a" style="left:167.20px;top:248.30px;width:5.80px;height:1px;background:#9a9da0"></div>
<div class="a" style="left:169.80px;top:254.95px;width:3.20px;height:1px;background:#9a9da0"></div>
<div class="a" style="left:169.80px;top:261.60px;width:3.20px;height:1px;background:#9a9da0"></div>
<div class="a" style="left:169.80px;top:268.25px;width:3.20px;height:1px;background:#9a9da0"></div>
<div class="a" style="left:169.80px;top:274.90px;width:3.20px;height:1px;background:#9a9da0"></div>
<div class="a" style="left:155.8px;top:270.90px;width:20px;text-align:center;font-size:9px;line-height:9px;color:#3c4043;transform:rotate(-90deg)">2</div>
<div class="a" style="left:169.80px;top:281.55px;width:3.20px;height:1px;background:#9a9da0"></div>
<div class="a" style="left:169.80px;top:288.20px;width:3.20px;height:1px;background:#9a9da0"></div>
<div class="a" style="left:169.80px;top:294.85px;width:3.20px;height:1px;background:#9a9da0"></div>
<div class="a" style="left:167.20px;top:301.50px;width:5.80px;height:1px;background:#9a9da0"></div>
<div class="a" style="left:169.80px;top:308.15px;width:3.20px;height:1px;background:#9a9da0"></div>
<div class="a" style="left:169.80px;top:314.80px;width:3.20px;height:1px;background:#9a9da0"></div>
<div class="a" style="left:169.80px;top:321.45px;width:3.20px;height:1px;background:#9a9da0"></div>
<div class="a" style="left:169.80px;top:328.10px;width:3.20px;height:1px;background:#9a9da0"></div>
<div class="a" style="left:155.8px;top:324.10px;width:20px;text-align:center;font-size:9px;line-height:9px;color:#3c4043;transform:rotate(-90deg)">3</div>
<div class="a" style="left:169.80px;top:334.75px;width:3.20px;height:1px;background:#9a9da0"></div>
<div class="a" style="left:169.80px;top:341.40px;width:3.20px;height:1px;background:#9a9da0"></div>
<div class="a" style="left:169.80px;top:348.05px;width:3.20px;height:1px;background:#9a9da0"></div>
<div class="a" style="left:167.20px;top:354.70px;width:5.80px;height:1px;background:#9a9da0"></div>
<div class="a" style="left:169.80px;top:361.35px;width:3.20px;height:1px;background:#9a9da0"></div>
<div class="a" style="left:169.80px;top:368.00px;width:3.20px;height:1px;background:#9a9da0"></div>
<div class="a" style="left:169.80px;top:374.65px;width:3.20px;height:1px;background:#9a9da0"></div>
<div class="a" style="left:169.80px;top:381.30px;width:3.20px;height:1px;background:#9a9da0"></div>
<div class="a" style="left:155.8px;top:377.30px;width:20px;text-align:center;font-size:9px;line-height:9px;color:#3c4043;transform:rotate(-90deg)">4</div>
<div class="a" style="left:169.80px;top:387.95px;width:3.20px;height:1px;background:#9a9da0"></div>
<div class="a" style="left:169.80px;top:394.60px;width:3.20px;height:1px;background:#9a9da0"></div>
<div class="a" style="left:169.80px;top:401.25px;width:3.20px;height:1px;background:#9a9da0"></div>
<div class="a" style="left:167.20px;top:407.90px;width:5.80px;height:1px;background:#9a9da0"></div>
<div class="a" style="left:169.80px;top:414.55px;width:3.20px;height:1px;background:#9a9da0"></div>
<div class="a" style="left:169.80px;top:421.20px;width:3.20px;height:1px;background:#9a9da0"></div>
<div class="a" style="left:169.80px;top:427.85px;width:3.20px;height:1px;background:#9a9da0"></div>
<div class="a" style="left:169.80px;top:434.50px;width:3.20px;height:1px;background:#9a9da0"></div>
<div class="a" style="left:155.8px;top:430.50px;width:20px;text-align:center;font-size:9px;line-height:9px;color:#3c4043;transform:rotate(-90deg)">5</div>
<div class="a" style="left:169.80px;top:441.15px;width:3.20px;height:1px;background:#9a9da0"></div>
<div class="a" style="left:169.80px;top:447.80px;width:3.20px;height:1px;background:#9a9da0"></div>
<div class="a" style="left:169.80px;top:454.45px;width:3.20px;height:1px;background:#9a9da0"></div>
<div class="a" style="left:167.20px;top:461.10px;width:5.80px;height:1px;background:#9a9da0"></div>
<div class="a" style="left:169.80px;top:467.75px;width:3.20px;height:1px;background:#9a9da0"></div>
<!-- slide art symbol -->
<svg width="0" height="0" style="left:0;top:0;position:absolute">
<defs>
  <clipPath id="phc"><rect x="275" y="141.2" width="219" height="145" rx="22"/></clipPath>
  <linearGradient id="phbg" x1="0" y1="0" x2="0" y2="1"><stop offset="0" stop-color="#7db0cb"/><stop offset="1" stop-color="#6b9fbc"/></linearGradient>
  <linearGradient id="desk" x1="0" y1="0" x2="0" y2="1"><stop offset="0" stop-color="#f3f4f5"/><stop offset="1" stop-color="#e9eaec"/></linearGradient>
  <g id="slideart">
    <rect width="532" height="299" fill="#5a8f8c"/>
    <!-- ring -->
    <circle cx="402" cy="61" r="73" fill="none" stroke="rgba(255,255,255,.12)" stroke-width="27"/>
    <path d="M402 61V-1A62 62 0 0 0 350 30z" fill="rgba(255,255,255,.08)"/>
    <circle cx="486" cy="37" r="17" fill="rgba(255,255,255,.09)"/>
    <circle cx="501" cy="115" r="11" fill="rgba(255,255,255,.09)"/>
    <!-- bars -->
    <g fill="rgba(255,255,255,.10)">
      <rect x="427" y="272" width="18" height="60" rx="9"/>
      <rect x="452" y="272" width="24" height="60" rx="12"/>
      <rect x="482" y="272" width="24" height="60" rx="12"/>
      <rect x="505" y="198" width="20" height="110" rx="10"/>
      <rect x="510" y="216" width="10" height="90" rx="5"/>
      <rect x="520" y="210" width="13" height="100" rx="6.5"/>
    </g>
    <!-- text -->
    <g fill="#fff" stroke="#fff" stroke-width="0.45" font-family="Liberation Sans" font-weight="bold" font-size="25" letter-spacing="0.3">
      <text x="54.3" y="125.4">Lesson<tspan dx="1">:</tspan></text>
      <text x="54.3" y="157.4">Classifying</text>
      <text x="54.3" y="189">Triangles</text>
    </g>
    <text x="54.8" y="225.9" fill="#fff" font-family="Liberation Sans" font-size="11.8">September 4, 20XX</text>
    <!-- photo -->
    <g clip-path="url(#phc)">
      <g transform="translate(275 141)">
        <rect width="219" height="145" fill="url(#phbg)"/>
        <!-- suit -->
        <path d="M50 61 C58 57 68 54 76 52 L96 50 C101 53 106 55 108 57 C113 64 116 80 117 92 L104 96 L104 112 L41 112 C41 100 41 88 42 79 C43 70 46 64 50 61z" fill="#13161b"/>
        <!-- shirt -->
        <path d="M76 52 L80 58 L92 58 L96 50 L100 62 L100 104 L90 108 L84 108 L77 72z" fill="#eef0f1"/>
        <path d="M85.5 63 L89.5 63 L95 104 L91 110 L86 106z" fill="#b4cde4"/>
        <path d="M76 52 L68 72 L82 108 L77 66z" fill="#0c0e12"/>
        <!-- neck & face -->
        <path d="M78.6 50 h13.4 v8 l-6.7 4 -6.7-4z" fill="#c99c84"/>
        <path d="M74 36 C74 29 79 27 86 27 C94 27 98.5 30 98.5 37 C98.5 46 95 57 86.3 58.5 C78 57 74 46 74 36z" fill="#ddb39b"/>
        <path d="M71 40 C68 26 75 17 88 17 C100 16 106 26 104 38 C103 43 101 45 99.5 42 C99 35 96 30 89 30 C81 30 76 34 75.5 41 C75 46 72 46 71 40z" fill="#3d2818"/><g fill="#3d2818"><circle cx="73" cy="35" r="2.4"/><circle cx="74.5" cy="27" r="2.6"/><circle cx="79.5" cy="21" r="2.6"/><circle cx="86" cy="18.8" r="2.6"/><circle cx="93" cy="18.8" r="2.6"/><circle cx="99" cy="22" r="2.6"/><circle cx="102.5" cy="29" r="2.5"/><circle cx="103" cy="36" r="2.2"/><circle cx="81" cy="29.5" r="2.2"/><circle cx="95" cy="29" r="2.2"/></g><g fill="#5a3c24"><circle cx="84" cy="21" r="1.4"/><circle cx="92" cy="20" r="1.2"/><circle cx="99" cy="26" r="1.2"/></g>
        <!-- hand / cuff -->
        <rect x="53" y="105.6" width="13" height="9" rx="2" fill="#f2f2f2"/>
        <path d="M64 104 C70 99 80 98 85.5 103 L85 114 C78 117 70 117 64 114z" fill="#d9ad94"/>
        <rect x="79.2" y="81" width="1.8" height="20" fill="#101010"/>
        <!-- desk -->
        <path d="M0 112H219V145H0z" fill="url(#desk)"/>
        <!-- yellow -->
        <rect x="36.4" y="84.5" width="9" height="19" fill="#e2d7a4"/>
        <!-- file holder -->
        <path d="M9 72 L27 72 L46 104 L46 132 L13 135 L9 134z" fill="#f5f5f5"/>
        <path d="M27 72 L46 104 L46 132 L30 134z" fill="#dedfe0"/>
        <rect x="11" y="124.6" width="14" height="3.8" rx="1.5" fill="#6a6a6a"/>
        <!-- black cup -->
        <path d="M45.5 121 h15 v12 a7.5 2 0 0 1 -15 0z" fill="#16181a"/>
        <ellipse cx="53" cy="121" rx="7.5" ry="1.8" fill="#2c2e31"/>
        <!-- white cup -->
        <path d="M67.5 114 h17 l-2 10 a6.5 2.2 0 0 1 -13 0z" fill="#fbfbfb"/>
        <!-- laptop -->
        <linearGradient id="lap" x1="0" y1="0" x2="1" y2="1"><stop offset="0" stop-color="#d4d5d7"/><stop offset="1" stop-color="#b9babd"/></linearGradient>
        <path d="M87.3 120.2 L100.4 118.4 L100.4 128 L92 126z" fill="#c9cacc"/>
        <path d="M104 90.3 L152 88.6 L149.6 122 L100.4 128z" fill="url(#lap)"/>
        <!-- pen holder -->
        <rect x="154.4" y="106" width="14.6" height="22" rx="1.5" fill="#17181a"/>
        <rect x="161" y="102" width="2.6" height="5.5" fill="#d8d8d8"/>
        <!-- lamp -->
        <path d="M170.7 52.6 L194.4 133.4" stroke="#141518" stroke-width="2.6"/>
        <path d="M165 58.5 L177.5 63.5 L166 86 C160 86 151 83 148 79z" fill="#1a1b1e"/>
        <path d="M162 131 C162 126 172 124.6 182 124.6 L195.3 125 L195.3 136.9 L175 136.9 C167 136.9 162 135 162 131z M170 129 L190 129 L190 126.5 L176 126.6 C172 126.8 170 127.5 170 129z" fill="#1a1b1e" fill-rule="evenodd"/>
        <path d="M194.4 135 Q199 138 205 142.5" stroke="#222" stroke-width="1" fill="none"/>
        <!-- plant -->
        <path d="M185.5 100 h20.5 l-1.5 20.5 h-17.5z" fill="#f0f0f0"/>
        <path d="M182 98 C180 90 186 84 193 84 C201 82 210 86 210 94 C211 100 207 103 196 103 C187 103 183 102 182 98z" fill="#5f8645"/>
        <path d="M186 92 C188 87 195 86 199 88 C202 90 198 94 193 94z" fill="#7da35a"/><g fill="#4e7438"><circle cx="185" cy="95" r="2.2"/><circle cx="190" cy="99" r="2"/><circle cx="200" cy="98" r="2.4"/><circle cx="206" cy="93" r="2.2"/><circle cx="203" cy="88" r="1.8"/></g><g fill="#88ad62"><circle cx="196" cy="91" r="1.5"/><circle cx="188" cy="90" r="1.3"/><circle cx="204" cy="95" r="1.2"/></g>
      </g>
    </g>
  </g>
</defs>
</svg>
<!-- main slide -->
<svg style="left:0;top:0" width="1024" height="541" viewBox="0 0 1024 541"><g transform="translate(333.3 168.6)"><use href="#slideart"/></g></svg>
<!-- notes resize -->
<div class="a" style="left:576px;top:482px;width:35px;height:1px;background:#747775"></div>
<!-- speaker notes -->
<div class="a" style="left:173.5px;top:498px;width:839px;height:35px;border-radius:6px;background:#edf2fa"></div>
<div class="a" style="left:185.5px;top:508.8px;font-size:10.7px;line-height:10.7px;color:#1f1f1f;white-space:nowrap">Click to add speaker notes</div>
<!-- blackbox -->
<div class="a" style="left:960px;top:492px;width:36px;height:35px;border-radius:3px;background:linear-gradient(135deg,#222 0%,#0a0a0a 40%,#2a2a2a 55%,#080808 70%);box-shadow:0 1px 3px rgba(0,0,0,.3)"></div>
<svg style="left:970px;top:497px" width="16" height="16" viewBox="0 0 16 16"><g fill="#ddd">
<circle cx="8" cy="1.5" r=".7"/><circle cx="5.5" cy="2.5" r=".7"/><circle cx="10.5" cy="2.5" r=".7"/>
<circle cx="3.5" cy="4.5" r=".7"/><circle cx="6.5" cy="4.5" r=".9"/><circle cx="9.5" cy="4.5" r=".9"/><circle cx="12.5" cy="4.5" r=".7"/>
<circle cx="3" cy="7" r=".7"/><circle cx="6.5" cy="7" r="1"/><circle cx="9.5" cy="7" r="1"/><circle cx="13" cy="7" r=".7"/>
<circle cx="3.5" cy="9.5" r=".7"/><circle cx="6.5" cy="9.5" r=".9"/><circle cx="9.5" cy="9.5" r=".9"/><circle cx="12.5" cy="9.5" r=".7"/>
<circle cx="5.5" cy="11.8" r=".7"/><circle cx="8" cy="12" r=".9"/><circle cx="10.5" cy="11.8" r=".7"/><circle cx="8" cy="14" r=".6"/>
</g></svg>
<div class="a" style="left:960px;top:514.5px;width:36px;text-align:center;font-size:5px;line-height:5px;color:#bbb;letter-spacing:.1px">BLACKBOX</div>
<!-- side chevron -->
<div class="a" style="left:1008px;top:510px;width:40px;height:40px;border-radius:50%;background:#fff;box-shadow:0 1px 4px rgba(0,0,0,.2)"></div>
<svg style="left:1014px;top:520px" width="6" height="9" viewBox="0 0 6 9"><path d="M5 .8L1.3 4.5 5 8.2" fill="none" stroke="#444746" stroke-width="1.4"/></svg>
<!-- selection -->
<svg style="left:0;top:0" width="1024" height="541" viewBox="0 0 1024 541">
<g fill="none" stroke="#4b8fe0" stroke-width="1.3">
<rect x="608" y="309.2" width="219" height="145"/>
<path d="M717.5 309V292"/>
</g>
<g fill="#1a73e8" stroke="#d2e3fc" stroke-width=".9">
<rect x="604.9" y="306.1" width="6.2" height="6.2"/>
<rect x="714.4" y="306.1" width="6.2" height="6.2"/>
<rect x="823.9" y="306.1" width="6.2" height="6.2"/>
<rect x="604.9" y="378.9" width="6.2" height="6.2"/>
<rect x="823.9" y="378.9" width="6.2" height="6.2"/>
<rect x="604.9" y="450.9" width="6.2" height="6.2"/>
<rect x="714.4" y="450.9" width="6.2" height="6.2"/>
<rect x="823.9" y="450.9" width="6.2" height="6.2"/>
<circle cx="717.5" cy="291.5" r="3.6"/>
</g>
<path d="M632.5 305.6l3.2 3.2-3.2 3.2-3.2-3.2z" fill="#f9ab00" stroke="#a86b00" stroke-width=".8"/>
</svg>

<div class="a" style="left:537.5px;top:132px;width:115px;height:102.5px;background:#fff;border-radius:0 0 0 5px;box-shadow:0 1px 3px rgba(60,64,67,.25),0 2px 6px rgba(60,64,67,.12)"></div>
<div class="a" style="left:537.5px;top:134px;width:115px;height:26px;background:#e9ebee"></div>
<div class="a" style="left:565.5px;top:143.3px;font-size:10.3px;line-height:10.3px;color:#333538;white-space:nowrap">Shapes</div>
<div class="a" style="left:636px;top:144.4px;border-left:5px solid #1f1f1f;border-top:3.2px solid transparent;border-bottom:3.2px solid transparent"></div>
<div class="a" style="left:565.5px;top:166.8px;font-size:10.3px;line-height:10.3px;color:#333538;white-space:nowrap">Arrows</div>
<div class="a" style="left:636px;top:167.9px;border-left:5px solid #9aa0a6;border-top:3.2px solid transparent;border-bottom:3.2px solid transparent"></div>
<div class="a" style="left:565.5px;top:190.6px;font-size:10.3px;line-height:10.3px;color:#333538;white-space:nowrap">Callouts</div>
<div class="a" style="left:636px;top:191.7px;border-left:5px solid #9aa0a6;border-top:3.2px solid transparent;border-bottom:3.2px solid transparent"></div>
<div class="a" style="left:565.5px;top:213.9px;font-size:10.3px;line-height:10.3px;color:#333538;white-space:nowrap">Equation</div>
<div class="a" style="left:636px;top:215.0px;border-left:5px solid #9aa0a6;border-top:3.2px solid transparent;border-bottom:3.2px solid transparent"></div>
<svg style="left:546.5px;top:141.5px" width="13" height="11" viewBox="0 0 13 11"><rect x=".6" y=".6" width="11.5" height="9.8" fill="none" stroke="#5f6368" stroke-width="1"/></svg>
<svg style="left:546.5px;top:165.5px" width="13" height="11" viewBox="0 0 13 11"><path d="M.6 3.2h6.5V.6l5.3 4.9-5.3 4.9V7.8H.6z" fill="none" stroke="#5f6368" stroke-width="1" stroke-linejoin="round"/></svg>
<svg style="left:546.5px;top:189px" width="13" height="12" viewBox="0 0 13 12"><path d="M.6.6h11.5v8.3H5.5L3.2 11.2V8.9H.6z" fill="none" stroke="#5f6368" stroke-width="1" stroke-linejoin="round"/></svg>
<svg style="left:547px;top:212.5px" width="12" height="12" viewBox="0 0 12 12"><path d="M4 .6h4v3.4h3.4v4H8v3.4H4V8H.6V4H4z" fill="none" stroke="#5f6368" stroke-width="1" stroke-linejoin="round"/></svg>
<div class="a" style="left:652px;top:135.5px;width:203px;height:154.5px;background:#fff;border-radius:0 5px 5px 5px;box-shadow:0 1px 3px rgba(60,64,67,.25),0 2px 6px rgba(60,64,67,.12)"></div>
<div class="a" style="left:652px;top:165.5px;width:203px;height:1px;background:#e3e3e3"></div>
<div class="a" style="left:652px;top:227px;width:203px;height:1px;background:#e3e3e3"></div>
<div class="a" style="left:674px;top:143.5px;width:15px;height:18px;background:#eeeff1;border-radius:2px"></div>
<svg style="left:0;top:0" width="1024" height="541" viewBox="0 0 1024 541"><g fill="none" stroke="#4d5156" stroke-width="1"><g transform="translate(664.80 152.50)"><rect x="-6" y="-5" width="12" height="10"/></g><g transform="translate(680.97 152.50)"><rect x="-6" y="-5" width="12" height="10" rx="2.5"/></g><g transform="translate(697.14 152.50)"><path d="M-6-5h9l3 3v7h-12z"/></g><g transform="translate(713.31 152.50)"><path d="M-3-5h6l3 3v7h-12v-7z"/></g><g transform="translate(729.48 152.50)"><path d="M-6-2l3-3h9v7l-3 3h-9z"/></g><g transform="translate(745.65 152.50)"><path d="M-3-5h6l3 3v7h-12v-7z"/></g><g transform="translate(761.82 152.50)"><path d="M-6-5h9a3 3 0 0 1 3 3v7h-12z"/></g><g transform="translate(777.99 152.50)"><path d="M-3-5h6a3 3 0 0 1 3 3v7h-12v-7a3 3 0 0 1 3-3z"/></g><g transform="translate(794.16 152.50)"><path d="M-3-5h9v7a3 3 0 0 1-3 3h-9v-7a3 3 0 0 1 3-3z"/></g><g transform="translate(664.80 181.30)"><ellipse rx="6" ry="5.5"/></g><g transform="translate(680.97 181.30)"><path d="M0-5l5.5 10h-11z"/></g><g transform="translate(697.14 181.30)"><path d="M-5.5-5.5v10.5h11z"/></g><g transform="translate(713.31 181.30)"><path d="M-3-5h9l-3 10h-9z"/></g><g transform="translate(729.48 181.30)"><path d="M-3.5-5h7l2.5 10h-12z"/></g><g transform="translate(745.65 181.30)"><path d="M0-6l6 6-6 6-6-6z"/></g><g transform="translate(761.82 181.30)"><polygon points="0.00,-6.00 5.90,-1.85 3.64,4.85 -3.64,4.85 -5.90,-1.85"/></g><g transform="translate(777.99 181.30)"><polygon points="3.10,-4.85 6.20,0.00 3.10,4.85 -3.10,4.85 -6.20,0.00 -3.10,-4.85"/><text x="0" y="2.3" font-size="6" text-anchor="middle" fill="#4d5156" stroke="none" font-family="Liberation Sans">6</text></g><g transform="translate(794.16 181.30)"><polygon points="0.00,-5.60 4.85,-3.49 6.04,1.25 2.69,5.05 -2.69,5.05 -6.04,1.25 -4.85,-3.49"/><text x="0" y="2.3" font-size="6" text-anchor="middle" fill="#4d5156" stroke="none" font-family="Liberation Sans">7</text></g><g transform="translate(810.33 181.30)"><polygon points="2.37,-5.17 5.73,-2.14 5.73,2.14 2.37,5.17 -2.37,5.17 -5.73,2.14 -5.73,-2.14 -2.37,-5.17"/><text x="0" y="2.3" font-size="6" text-anchor="middle" fill="#4d5156" stroke="none" font-family="Liberation Sans">8</text></g><g transform="translate(826.50 181.30)"><polygon points="1.92,-5.33 5.02,-3.29 6.20,0.00 5.02,3.29 1.92,5.33 -1.92,5.33 -5.02,3.29 -6.20,0.00 -5.02,-3.29 -1.92,-5.33"/><text x="0" y="2.3" font-size="6" text-anchor="middle" fill="#4d5156" stroke="none" font-family="Liberation Sans">10</text></g><g transform="translate(842.67 181.30)"><polygon points="1.60,-5.41 4.38,-3.96 5.99,-1.45 5.99,1.45 4.38,3.96 1.60,5.41 -1.60,5.41 -4.38,3.96 -5.99,1.45 -5.99,-1.45 -4.38,-3.96 -1.60,-5.41"/><text x="0" y="2.3" font-size="6" text-anchor="middle" fill="#4d5156" stroke="none" font-family="Liberation Sans">12</text></g><g transform="translate(664.80 197.50)"><path d="M0 0h5.5A5.5 5.5 0 1 1 0-5.5z"/></g><g transform="translate(680.97 197.50)"><path d="M-1-5.5A5.5 5.5 0 0 1 5 1"/></g><g transform="translate(697.14 197.50)"><path d="M-2-5.5h2a5 5 0 0 1 4.5 3l1.5 4a5 5 0 0 1-5 4.5h-2a5 5 0 0 1-5-5v-1a5 5 0 0 1 4-5.5z"/></g><g transform="translate(713.31 197.50)"><path d="M6-5.5v6a5.5 5.5 0 0 1-5.5 5.5h-1a5.5 5.5 0 0 1-5.5-5.5v-1a5 5 0 0 1 5-5z"/></g><g transform="translate(729.48 197.50)"><rect x="-6" y="-5.5" width="12" height="11"/><rect x="-3.5" y="-3" width="7" height="6"/></g><g transform="translate(745.65 197.50)"><path d="M-6 5.5v-11h12l-2.5 2.5h-7v6z"/></g><g transform="translate(761.82 197.50)"><path d="M-6-5.5h5v5.5h7v5.5h-12z"/></g><g transform="translate(777.99 197.50)"><path d="M-6 5.5l8-11h4l-8 11z"/></g><g transform="translate(794.16 197.50)"><path d="M-2.5-5.5h5v3h3.5v5h-3.5v3h-5v-3h-3.5v-5h3.5z"/></g><g transform="translate(810.33 197.50)"><path d="M-2.5-5.5h5l1 2h2v2l1 1v1l-1 1v2h-2l-1 2h-5l-1-2h-2v-2l-1-1v-1l1-1v-2h2z"/></g><g transform="translate(826.50 197.50)"><ellipse cy="-3.5" rx="5.5" ry="2"/><path d="M-5.5-3.5v7a5.5 2 0 0 0 11 0v-7"/></g><g transform="translate(842.67 197.50)"><path d="M-5.5-2.5h8.5v8h-8.5z M-5.5-2.5l3-3h8.5l-3 3 M6-5.5v8l-3 3"/></g><g transform="translate(664.80 213.30)"><rect x="-6" y="-5.5" width="12" height="11"/><rect x="-4" y="-3.5" width="8" height="7" stroke-width="1.6"/></g><g transform="translate(680.97 213.30)"><circle r="5.8"/><circle r="2.8"/></g><g transform="translate(697.14 213.30)"><circle r="5.8"/><circle r="3.8"/><path d="M-2.7-2.7l5.4 5.4"/></g><g transform="translate(713.31 213.30)"><path d="M-6 2a6 6 0 0 1 12 0h-2a4 4 0 0 0-8 0z"/></g><g transform="translate(729.48 213.30)"><path d="M-5.5-5.5h11v7l-4 4h-7z M1.5 5.5v-4h4"/></g><g transform="translate(745.65 213.30)"><circle r="5.8"/><circle cx="-2" cy="-1.5" r=".5"/><circle cx="2" cy="-1.5" r=".5"/><path d="M-3 1.5a3.2 3.2 0 0 0 6 0"/></g><g transform="translate(761.82 213.30)"><path d="M0 5.5C-4 2-6 0-6-2.5a3 3 0 0 1 6-1 3 3 0 0 1 6 1C6 0 4 2 0 5.5z"/></g><g transform="translate(777.99 213.30)"><path d="M-5-5.5l4 1.5-1 2 3 1-1 2 4 4.5-5-3 1-1.5-3-1 1-2z"/></g><g transform="translate(794.16 213.30)"><circle r="3"/><path d="M0-6v2M0 4v2M-6 0h2M4 0h2M-4.2-4.2l1.4 1.4M2.8 2.8l1.4 1.4M-4.2 4.2l1.4-1.4M2.8-2.8l1.4-1.4"/></g><g transform="translate(810.33 213.30)"><path d="M2-5.5a5.5 5.5 0 1 0 0 11a7 7 0 0 1 0-11z"/></g><g transform="translate(826.50 213.30)"><path d="M-4-4a2 2 0 0 1 3-.5 2 2 0 0 1 3.5 0 2 2 0 0 1 3 2 2 2 0 0 1 0 3.5 2 2 0 0 1-2 3 2 2 0 0 1-3.5.5 2 2 0 0 1-3.5-.5 2 2 0 0 1-2.5-3 2 2 0 0 1 0-3 2 2 0 0 1 2-2z"/></g><g transform="translate(664.80 241.70)"><rect x="-6" y="-5" width="12" height="10"/></g><g transform="translate(680.97 241.70)"><rect x="-6" y="-5" width="12" height="10" rx="2.5"/></g><g transform="translate(697.14 241.70)"><path d="M0-3.5l6 3.5-6 3.5-6-3.5z"/></g><g transform="translate(713.31 241.70)"><path d="M-3-5h9l-3 10h-9z"/></g><g transform="translate(729.48 241.70)"><rect x="-6" y="-5" width="12" height="10"/><path d="M-4-5v10M4-5v10"/></g><g transform="translate(745.65 241.70)"><rect x="-6" y="-5" width="12" height="10"/><path d="M-4-5v10M-6-3h12"/></g><g transform="translate(761.82 241.70)"><path d="M-6-5h12v8c-4-2-8 3-12 1z"/></g><g transform="translate(777.99 241.70)"><path d="M-6-2h9v7c-3-1-6 1-9 0z M-4.5-3.5v-1.5h9v7h-1.5 M-3-5v-1h9v7h-1.5"/></g><g transform="translate(794.16 241.70)"><rect x="-6" y="-3" width="12" height="6" rx="3"/></g><g transform="translate(810.33 241.70)"><path d="M-3-4h6l3 4-3 4h-6l-3-4z"/></g><g transform="translate(826.50 241.70)"><path d="M-6-1l12-4v10h-12z"/></g><g transform="translate(842.67 241.70)"><path d="M-6-5h12l-2.5 10h-7z"/></g><g transform="translate(664.80 258.00)"><circle r="5.5"/></g><g transform="translate(680.97 258.00)"><path d="M-5.5-5.5h11v7l-5.5 4-5.5-4z"/></g><g transform="translate(697.14 258.00)"><path d="M-2.5-5h8.5v10h-11.5v-7z"/></g><g transform="translate(713.31 258.00)"><path d="M-6-4c3 2 9-2 12 0v8c-3-2-9 2-12 0z"/></g><g transform="translate(729.48 258.00)"><circle r="5.5"/><path d="M-3.9-3.9l7.8 7.8M3.9-3.9l-7.8 7.8"/></g><g transform="translate(745.65 258.00)"><circle r="5.5"/><path d="M0-5.5v11M-5.5 0h11"/></g><g transform="translate(761.82 258.00)"><path d="M-4-5.5h8l-8 11h8z"/></g><g transform="translate(777.99 258.00)"><path d="M0-6l3.5 6-3.5 6-3.5-6z M-3.5 0h7"/></g><g transform="translate(794.16 258.00)"><path d="M0-5l5.5 10h-11z"/></g><g transform="translate(810.33 258.00)"><path d="M0 5l5.5-10h-11z"/></g><g transform="translate(826.50 258.00)"><path d="M-4-5.5h10a3 5.5 0 0 0 0 11h-10a3 5.5 0 0 1 0-11z"/></g><g transform="translate(842.67 258.00)"><path d="M-6-5.5h6a5.5 5.5 0 0 1 0 11h-6z"/></g><g transform="translate(664.80 273.80)"><path d="M6 5.5H0a5.5 5.5 0 1 1 5.5-5.5v5.5"/></g><g transform="translate(680.97 273.80)"><ellipse cy="-3.5" rx="5.5" ry="2"/><path d="M-5.5-3.5v7a5.5 2 0 0 0 11 0v-7"/></g><g transform="translate(697.14 273.80)"><path d="M-3-5.5h6a3 5.5 0 0 1 0 11h-6a3 5.5 0 0 1 0-11z"/><path d="M3-5.5a3 5.5 0 0 0 0 11"/></g><g transform="translate(713.31 273.80)"><path d="M-6 0l3-5h6a5 5 0 0 1 0 10h-6z"/></g></g></svg>
<svg style="left:0;top:0" width="1024" height="541" viewBox="0 0 1024 541">
<g fill="#e01b24" stroke="none">
  <rect x="542.7" y="66" width="2.4" height="27"/>
  <path d="M538.6 92.3h10.6l-5.3 9.4z"/>
  <rect x="600.5" y="73" width="2.4" height="47"/>
  <path d="M596.5 119.8h10.6l-5.3 9.5z"/>
  <rect x="702" y="150.7" width="119" height="2.1"/>
  <path d="M693.3 151.75l9.7-5.2v10.4z"/>
  <rect x="447.8" y="415.4" width="117" height="2.1"/>
  <path d="M573.8 416.45l-9.6-5.2v10.4z"/>
</g>
<g fill="none" stroke="#e01b24">
  <rect x="533.3" y="108.95" width="37.55" height="20" stroke-width="3.3"/>
  <rect x="538.7" y="132.5" width="113" height="26.6" stroke-width="3.4"/>
  <rect x="673.25" y="134.65" width="16" height="33.7" stroke-width="3.5"/>
  <rect x="577.8" y="299.3" width="273.2" height="165.9" stroke-width="3.6"/>
</g>
</svg>

</body></html>
